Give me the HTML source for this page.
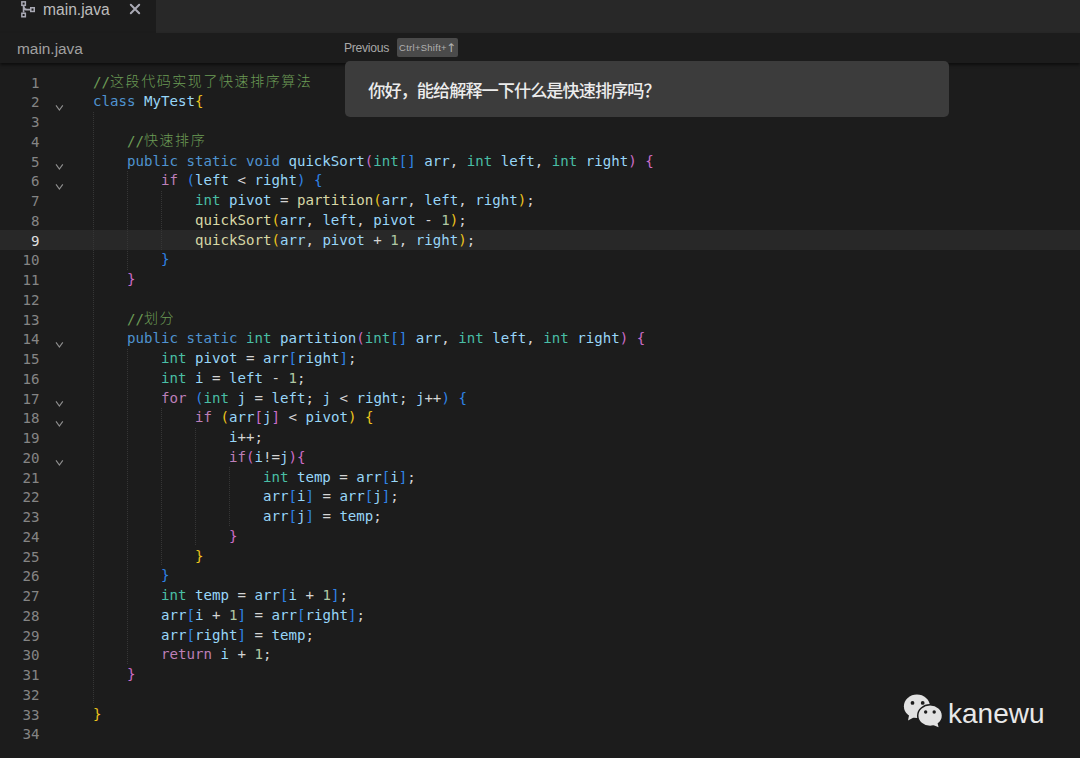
<!DOCTYPE html>
<html lang="zh-CN">
<head>
<meta charset="utf-8">
<title>main.java</title>
<style>
html,body{margin:0;padding:0;}
body{width:1080px;height:758px;overflow:hidden;background:#1c1c1c;position:relative;font-family:"Liberation Sans","Noto Sans CJK SC",sans-serif;}
.tabbar{position:absolute;left:0;top:0;width:1080px;height:32.5px;background:#282828;}
.tab{position:absolute;left:0;top:0;width:156px;height:32.5px;background:#1c1c1c;}
.tab .name{position:absolute;left:43px;top:1px;font-size:15.6px;line-height:18px;color:#bcbcbc;white-space:nowrap;}
.tab .x{position:absolute;left:127.8px;top:2.2px;}
.tab .ico{position:absolute;left:20px;top:1px;}
.crumb{position:absolute;left:0;top:32.5px;width:1080px;height:30.3px;background:#1c1c1c;box-shadow:0 2px 3px rgba(0,0,0,.55);}
.crumb .name{position:absolute;left:17px;top:7px;font-size:15.4px;line-height:18px;color:#a0a0a0;white-space:nowrap;}
.prev{position:absolute;left:344px;top:40px;font-size:12.2px;line-height:16px;color:#a8a8a8;white-space:nowrap;letter-spacing:-0.3px;}
.kbd{position:absolute;left:397px;top:38px;width:61px;height:19px;background:#4a4a4a;border-radius:2px;color:#b2b2b2;font-size:9.4px;line-height:18px;text-align:center;white-space:nowrap;letter-spacing:0.32px;}
.kbd b{font-weight:normal;font-family:"DejaVu Sans",sans-serif;font-size:12px;letter-spacing:0;position:relative;top:0.5px;margin-left:-1px;}
.bubble{position:absolute;left:345px;top:61px;width:604px;height:56px;background:#3c3c3c;border-radius:5px;}
.bubble span{position:absolute;left:23.3px;top:18px;font-size:17.2px;line-height:24px;color:#ececec;white-space:nowrap;font-family:"Liberation Sans","Noto Sans CJK SC",sans-serif;font-weight:500;letter-spacing:-1.0px;}
.code{position:absolute;left:0;top:72.0px;width:1080px;font-family:"DejaVu Sans Mono","Noto Sans CJK SC",monospace;font-size:14.12px;color:#d4d4d4;}
.ln{position:relative;height:19.75px;line-height:19.75px;white-space:pre;}
.ln.cur{background:#282828;}
.no{position:absolute;left:0;top:1.5px;width:39.5px;text-align:right;color:#858585;}
.cur .no{color:#e0e0e0;}
.cd{position:absolute;left:93px;top:0.6px;}
.c{color:#6c9c56}.k{color:#4f93d0}.p{color:#bd7fb9}.t{color:#49bea5}.v{color:#98d6f8}.f{color:#d8d8a6}.n{color:#b0c9a3}
.b1{color:#ecc41c}.b2{color:#cc6cc8}.b3{color:#2f83e6}
i.z{font-style:normal;font-family:"Liberation Sans","Noto Sans CJK SC",sans-serif;font-size:14px;letter-spacing:1.57px;font-weight:300;position:relative;top:-1px;}
.g{position:absolute;width:1px;background:repeating-linear-gradient(to bottom,#363636 0,#363636 1px,transparent 1px,transparent 2px);}
.chev{position:absolute;left:53px;}
.wm{position:absolute;left:948px;top:695.6px;font-size:28px;line-height:36px;color:#e8e8e8;white-space:nowrap;}
.wmico{position:absolute;left:903px;top:693px;}
</style>
</head>
<body>
<div class="tabbar"><div class="tab">
<svg class="ico" width="18" height="18" viewBox="0 0 18 18"><g fill="none" stroke="#a9a9b4" stroke-width="1.5"><rect x="1.85" y="0.85" width="3.5" height="3.5"/><rect x="1.85" y="12.25" width="3.5" height="3.5"/><rect x="10.75" y="6.75" width="3.5" height="3.7"/><path d="M3.6 5.1V11.5M3.7 6Q4.2 8.7 7 8.7H10" stroke-width="1.7"/></g></svg>
<span class="name">main.java</span>
<svg class="x" width="14" height="14" viewBox="0 0 14 14"><path d="M2.8 2.8L11.2 11.2M11.2 2.8L2.8 11.2" stroke="#a9a9b4" stroke-width="2" stroke-linecap="round" fill="none"/></svg>
</div></div>
<div class="crumb"><span class="name">main.java</span></div>
<div class="prev">Previous</div>
<div class="kbd">Ctrl+Shift+<b>&#8593;</b></div>
<div class="code">
<div class="ln"><span class="no">1</span><span class="cd"><span class="c">//<i class="z">这段代码实现了快速排序算法</i></span></span></div>
<div class="ln"><span class="no">2</span><span class="cd"><span class="k">class</span> <span class="v">MyTest</span><span class="b1">{</span></span></div>
<div class="ln"><span class="no">3</span><span class="cd"></span></div>
<div class="ln"><span class="no">4</span><span class="cd">    <span class="c">//<i class="z">快速排序</i></span></span></div>
<div class="ln"><span class="no">5</span><span class="cd">    <span class="k">public static void</span> <span class="v">quickSort</span><span class="b2">(</span><span class="t">int</span><span class="b3">[]</span> <span class="v">arr</span>, <span class="t">int</span> <span class="v">left</span>, <span class="t">int</span> <span class="v">right</span><span class="b2">)</span> <span class="b2">{</span></span></div>
<div class="ln"><span class="no">6</span><span class="cd">        <span class="p">if</span> <span class="b3">(</span><span class="v">left</span> &lt; <span class="v">right</span><span class="b3">)</span> <span class="b3">{</span></span></div>
<div class="ln"><span class="no">7</span><span class="cd">            <span class="t">int</span> <span class="v">pivot</span> = <span class="f">partition</span><span class="b1">(</span><span class="v">arr</span>, <span class="v">left</span>, <span class="v">right</span><span class="b1">)</span>;</span></div>
<div class="ln"><span class="no">8</span><span class="cd">            <span class="f">quickSort</span><span class="b1">(</span><span class="v">arr</span>, <span class="v">left</span>, <span class="v">pivot</span> - <span class="n">1</span><span class="b1">)</span>;</span></div>
<div class="ln cur"><span class="no">9</span><span class="cd">            <span class="f">quickSort</span><span class="b1">(</span><span class="v">arr</span>, <span class="v">pivot</span> + <span class="n">1</span>, <span class="v">right</span><span class="b1">)</span>;</span></div>
<div class="ln"><span class="no">10</span><span class="cd">        <span class="b3">}</span></span></div>
<div class="ln"><span class="no">11</span><span class="cd">    <span class="b2">}</span></span></div>
<div class="ln"><span class="no">12</span><span class="cd"></span></div>
<div class="ln"><span class="no">13</span><span class="cd">    <span class="c">//<i class="z">划分</i></span></span></div>
<div class="ln"><span class="no">14</span><span class="cd">    <span class="k">public static</span> <span class="t">int</span> <span class="v">partition</span><span class="b2">(</span><span class="t">int</span><span class="b3">[]</span> <span class="v">arr</span>, <span class="t">int</span> <span class="v">left</span>, <span class="t">int</span> <span class="v">right</span><span class="b2">)</span> <span class="b2">{</span></span></div>
<div class="ln"><span class="no">15</span><span class="cd">        <span class="t">int</span> <span class="v">pivot</span> = <span class="v">arr</span><span class="b3">[</span><span class="v">right</span><span class="b3">]</span>;</span></div>
<div class="ln"><span class="no">16</span><span class="cd">        <span class="t">int</span> <span class="v">i</span> = <span class="v">left</span> - <span class="n">1</span>;</span></div>
<div class="ln"><span class="no">17</span><span class="cd">        <span class="p">for</span> <span class="b3">(</span><span class="t">int</span> <span class="v">j</span> = <span class="v">left</span>; <span class="v">j</span> &lt; <span class="v">right</span>; <span class="v">j</span>++<span class="b3">)</span> <span class="b3">{</span></span></div>
<div class="ln"><span class="no">18</span><span class="cd">            <span class="p">if</span> <span class="b1">(</span><span class="v">arr</span><span class="b2">[</span><span class="v">j</span><span class="b2">]</span> &lt; <span class="v">pivot</span><span class="b1">)</span> <span class="b1">{</span></span></div>
<div class="ln"><span class="no">19</span><span class="cd">                <span class="v">i</span>++;</span></div>
<div class="ln"><span class="no">20</span><span class="cd">                <span class="p">if</span><span class="b2">(</span><span class="v">i</span>!=<span class="v">j</span><span class="b2">)</span><span class="b2">{</span></span></div>
<div class="ln"><span class="no">21</span><span class="cd">                    <span class="t">int</span> <span class="v">temp</span> = <span class="v">arr</span><span class="b3">[</span><span class="v">i</span><span class="b3">]</span>;</span></div>
<div class="ln"><span class="no">22</span><span class="cd">                    <span class="v">arr</span><span class="b3">[</span><span class="v">i</span><span class="b3">]</span> = <span class="v">arr</span><span class="b3">[</span><span class="v">j</span><span class="b3">]</span>;</span></div>
<div class="ln"><span class="no">23</span><span class="cd">                    <span class="v">arr</span><span class="b3">[</span><span class="v">j</span><span class="b3">]</span> = <span class="v">temp</span>;</span></div>
<div class="ln"><span class="no">24</span><span class="cd">                <span class="b2">}</span></span></div>
<div class="ln"><span class="no">25</span><span class="cd">            <span class="b1">}</span></span></div>
<div class="ln"><span class="no">26</span><span class="cd">        <span class="b3">}</span></span></div>
<div class="ln"><span class="no">27</span><span class="cd">        <span class="t">int</span> <span class="v">temp</span> = <span class="v">arr</span><span class="b3">[</span><span class="v">i</span> + <span class="n">1</span><span class="b3">]</span>;</span></div>
<div class="ln"><span class="no">28</span><span class="cd">        <span class="v">arr</span><span class="b3">[</span><span class="v">i</span> + <span class="n">1</span><span class="b3">]</span> = <span class="v">arr</span><span class="b3">[</span><span class="v">right</span><span class="b3">]</span>;</span></div>
<div class="ln"><span class="no">29</span><span class="cd">        <span class="v">arr</span><span class="b3">[</span><span class="v">right</span><span class="b3">]</span> = <span class="v">temp</span>;</span></div>
<div class="ln"><span class="no">30</span><span class="cd">        <span class="p">return</span> <span class="v">i</span> + <span class="n">1</span>;</span></div>
<div class="ln"><span class="no">31</span><span class="cd">    <span class="b2">}</span></span></div>
<div class="ln"><span class="no">32</span><span class="cd"></span></div>
<div class="ln"><span class="no">33</span><span class="cd"><span class="b1">}</span></span></div>
<div class="ln"><span class="no">34</span><span class="cd"></span></div>
</div>
<div class="g" style="left:93.0px;top:111.50px;height:592.50px"></div><div class="g" style="left:127.0px;top:170.75px;height:98.75px"></div><div class="g" style="left:127.0px;top:348.50px;height:316.00px"></div><div class="g" style="left:161.0px;top:190.50px;height:59.25px"></div><div class="g" style="left:161.0px;top:407.75px;height:158.00px"></div><div class="g" style="left:195.0px;top:427.50px;height:118.50px"></div><div class="g" style="left:229.0px;top:467.00px;height:59.25px"></div>
<svg class="chev" style="top:101.75px" width="12" height="12" viewBox="0 0 12 12"><path d="M3 3.4 L6.4 8 L9.8 3.4" fill="none" stroke="#8e8e8e" stroke-width="1.15"/></svg><svg class="chev" style="top:161.00px" width="12" height="12" viewBox="0 0 12 12"><path d="M3 3.4 L6.4 8 L9.8 3.4" fill="none" stroke="#8e8e8e" stroke-width="1.15"/></svg><svg class="chev" style="top:180.75px" width="12" height="12" viewBox="0 0 12 12"><path d="M3 3.4 L6.4 8 L9.8 3.4" fill="none" stroke="#8e8e8e" stroke-width="1.15"/></svg><svg class="chev" style="top:338.75px" width="12" height="12" viewBox="0 0 12 12"><path d="M3 3.4 L6.4 8 L9.8 3.4" fill="none" stroke="#8e8e8e" stroke-width="1.15"/></svg><svg class="chev" style="top:398.00px" width="12" height="12" viewBox="0 0 12 12"><path d="M3 3.4 L6.4 8 L9.8 3.4" fill="none" stroke="#8e8e8e" stroke-width="1.15"/></svg><svg class="chev" style="top:417.75px" width="12" height="12" viewBox="0 0 12 12"><path d="M3 3.4 L6.4 8 L9.8 3.4" fill="none" stroke="#8e8e8e" stroke-width="1.15"/></svg><svg class="chev" style="top:457.25px" width="12" height="12" viewBox="0 0 12 12"><path d="M3 3.4 L6.4 8 L9.8 3.4" fill="none" stroke="#8e8e8e" stroke-width="1.15"/></svg>
<div class="bubble"><span>你好，能给解释一下什么是快速排序吗？</span></div>
<svg class="wmico" width="42" height="36" viewBox="0 0 42 36"><g fill="#e2e2e2"><ellipse cx="13.9" cy="13.3" rx="13" ry="11.7"/><path d="M6.3 21 L5 27.4 L12.5 23.6 Z"/><ellipse cx="27.1" cy="22.65" rx="12.4" ry="10.9" stroke="#1c1c1c" stroke-width="1.5"/><path d="M29.5 31.8 L35.6 34.2 L34.2 28.8 Z"/></g><g fill="#1c1c1c"><circle cx="9.5" cy="9.9" r="1.9"/><circle cx="19.7" cy="9.9" r="1.9"/><circle cx="22.65" cy="19" r="1.7"/><circle cx="31.2" cy="19" r="1.7"/></g></svg>
<div class="wm">kanewu</div>
</body>
</html>
